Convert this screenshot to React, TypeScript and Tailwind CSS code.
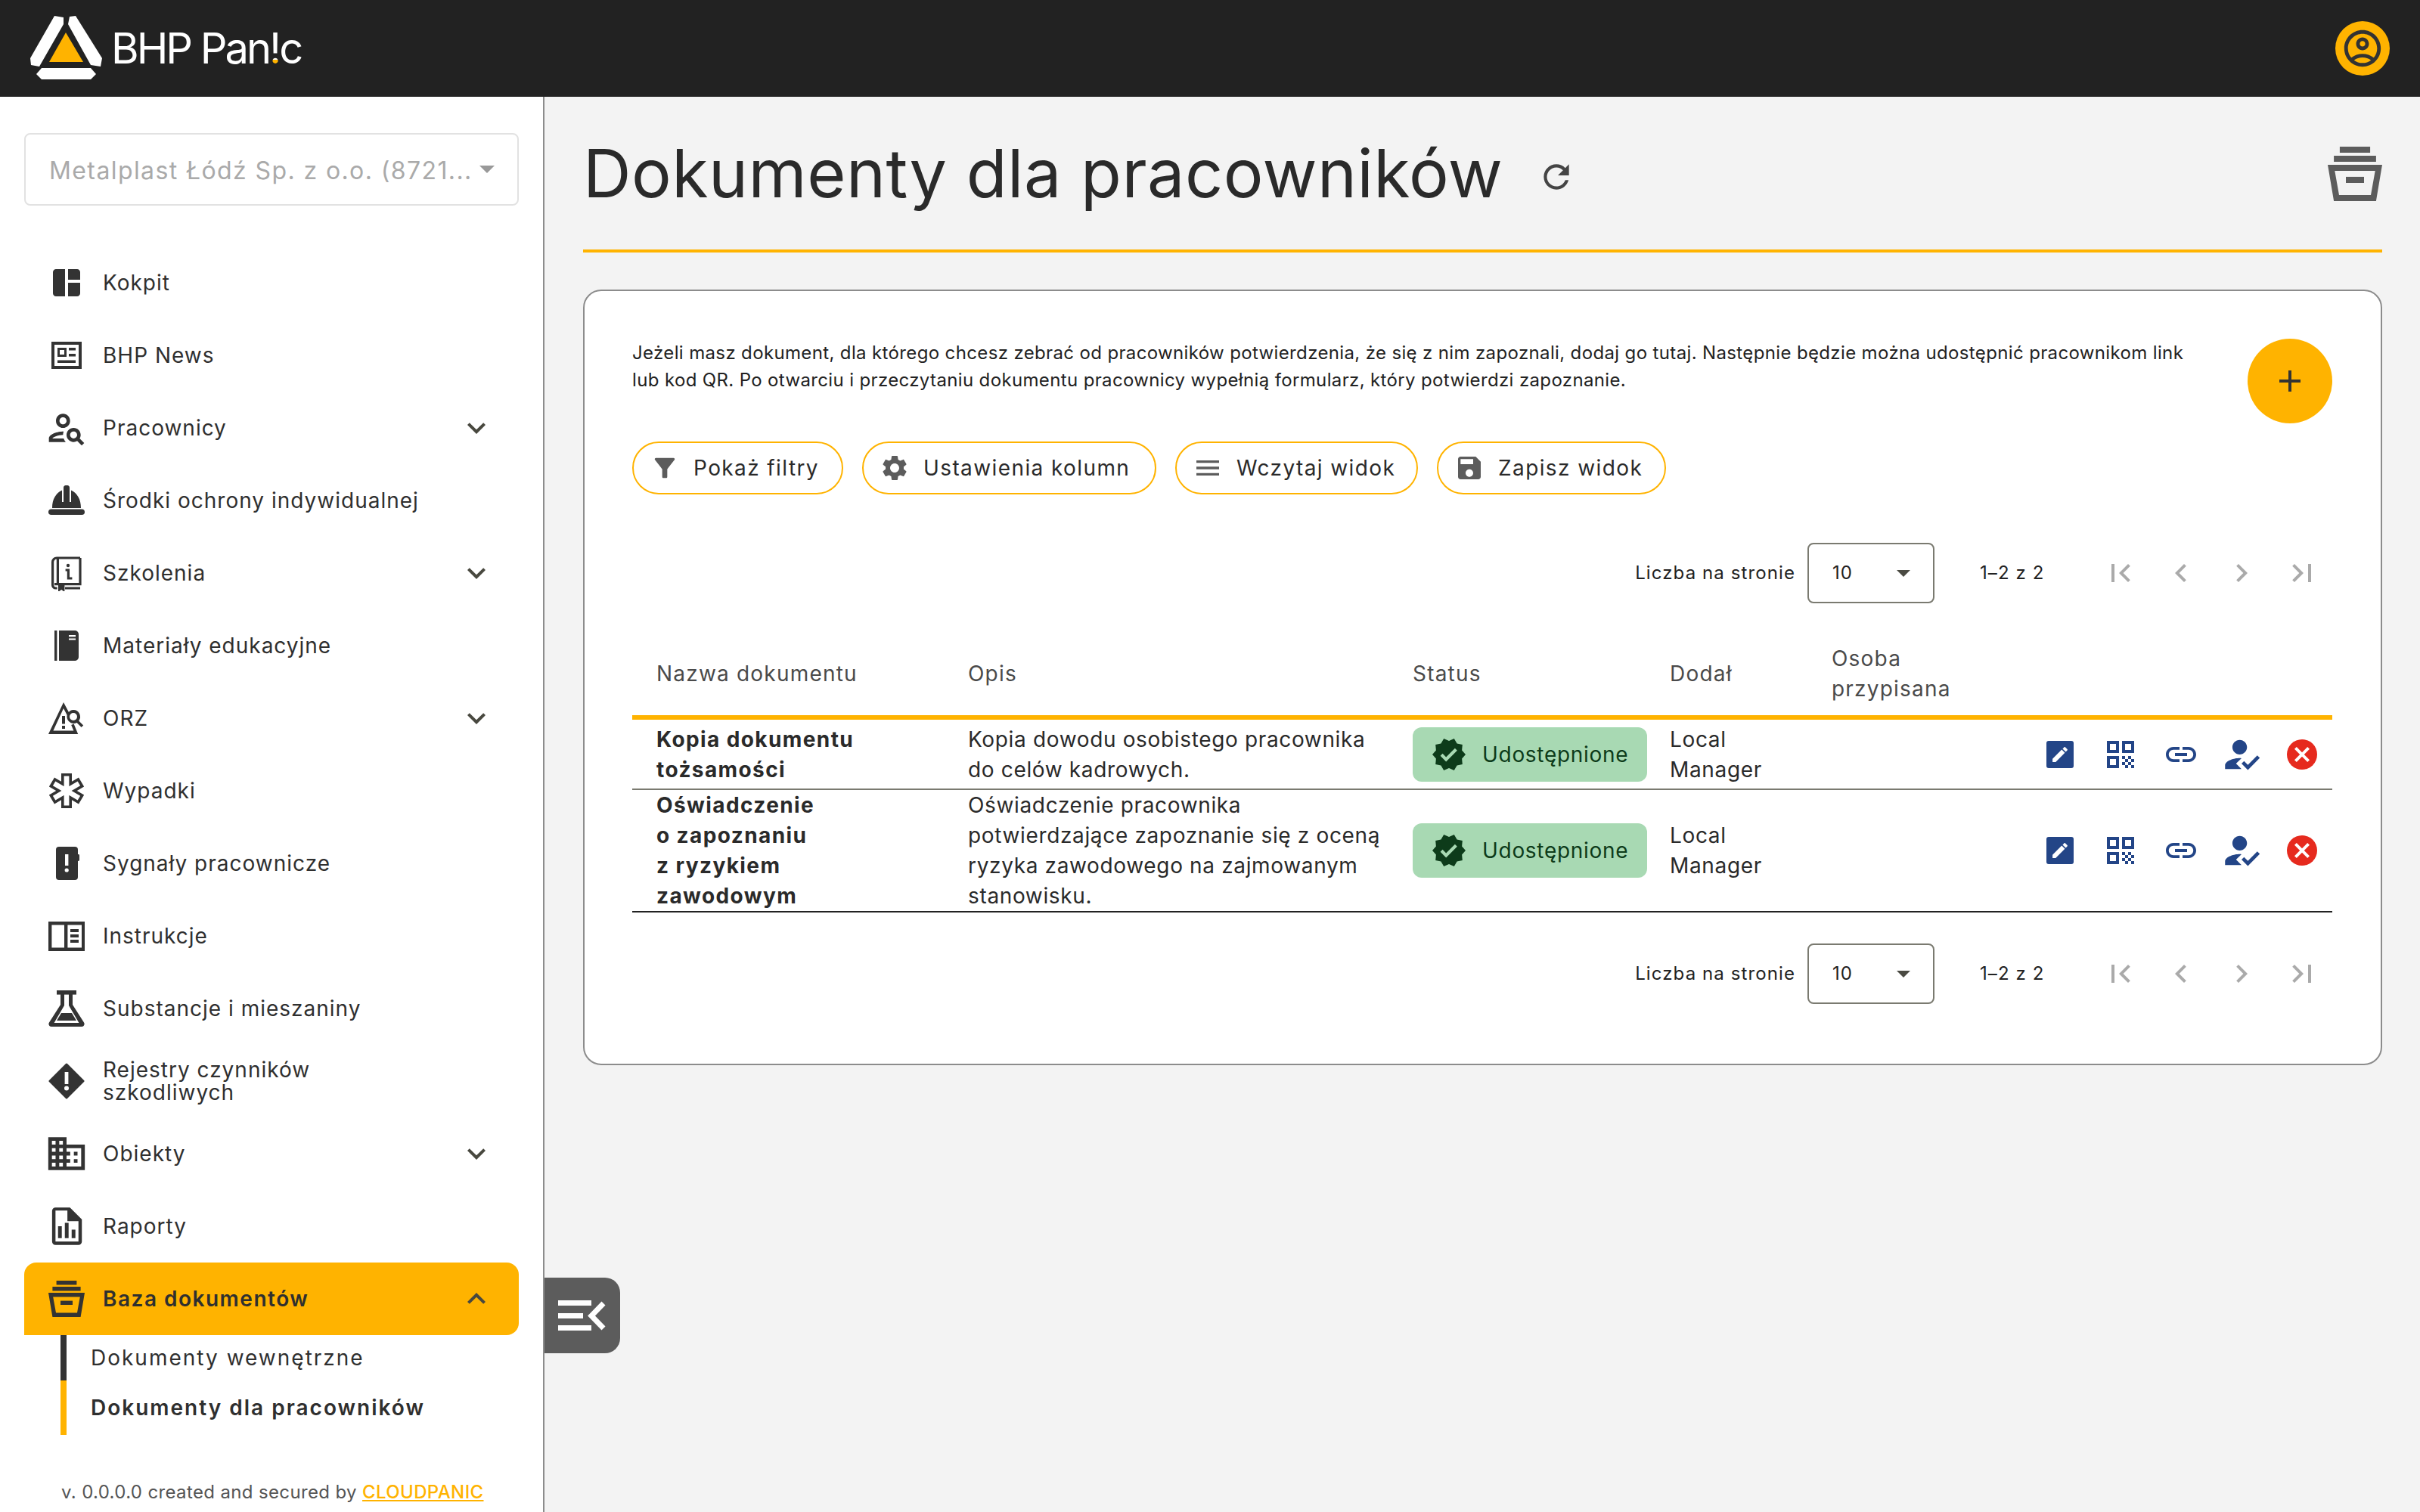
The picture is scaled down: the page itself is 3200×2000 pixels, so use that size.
import React from "react";

const ACCENT = "#ffb300";

type IconProps = { size?: number; className?: string };

const ArchiveIcon = ({ size = 48, className = "" }: IconProps) => (
  <svg width={size} height={size} viewBox="0 0 24 24" fill="currentColor" className={className}>
    <path d="M5.300 0h13.400v2.700H5.300zM2.700 4h18.600v2.700H2.700z" />
    <path
      fillRule="evenodd"
      d="M0 8h24l-2.700 16H2.700L0 8zm3.100 2.700 1.900 10.600h14l1.900-10.600H3.100z"
    />
    <path d="M8 13.300h8V16H8z" />
  </svg>
);

const Mat = ({ d, size = 48, className = "" }: IconProps & { d: string }) => (
  <svg width={size} height={size} viewBox="0 0 24 24" fill="currentColor" className={className}>
    <path fillRule="evenodd" d={d} />
  </svg>
);

const icons: Record<string, React.ReactNode> = {
  dashboard: <Mat size={48} d="M11 21H5c-1.100 0-2-.9-2-2V5c0-1.100.9-2 2-2h6v18zm2 0h6c1.100 0 2-.9 2-2v-7h-8v9zm8-11V5c0-1.100-.9-2-2-2h-6v7h8z" />,
  news: (
    <svg width="48" height="48" viewBox="0 0 24 24" fill="currentColor">
      <path fillRule="evenodd" d="M2 3h20v18H2V3zm2 2v14h16V5H4z" />
      <path fillRule="evenodd" d="M6 7h6v6H6V7zm1.500 1.500v3h3v-3h-3z" />
      <path d="M13.500 7H18v1.800h-4.500zM13.500 11H18v1.800h-4.500zM6 15.200h12V17H6z" />
    </svg>
  ),
  people: <Mat size={56} d="M10 12c2.210 0 4-1.790 4-4s-1.790-4-4-4-4 1.790-4 4 1.790 4 4 4zm0-6c1.100 0 2 .9 2 2s-.9 2-2 2-2-.9-2-2 .9-2 2-2zM4 18c.22-.72 3.310-2 6-2 0-.7.13-1.370.35-1.990C7.620 13.910 2 15.270 2 18v2h9.540c-.52-.59-.93-1.270-1.190-2H4zM19.430 18.020c.36-.58.57-1.260.57-2.020 0-2.210-1.790-4-4-4s-4 1.790-4 4 1.790 4 4 4c.74 0 1.430-.22 2.020-.57L20.590 22 22 20.590l-2.570-2.570zM16 18c-1.100 0-2-.9-2-2s.9-2 2-2 2 .9 2 2-.9 2-2 2z" />,
  helmet: (
    <svg width="48" height="48" viewBox="0 0 24 24" fill="currentColor">
      <path d="M2.500 17C2.500 11 5 7 9 5.200V13h1V3.500c0-.8.6-1.500 1.400-1.500h1.200c.8 0 1.400.7 1.400 1.500V13h1V5.200C19 7 21.500 11 21.500 17z" />
      <rect x="0" y="17.700" width="24" height="3.800" rx="1.900" />
    </svg>
  ),
  book: (
    <svg width="48" height="48" viewBox="0 0 24 24" fill="none" stroke="currentColor">
      <path strokeWidth="1.600" d="M21 2H5.500C4 2 2.800 3.200 2.800 4.700V20c0 1.200.9 2 2 2h1M11 22h10M4 19.300h17V2M6.200 2.200v17" />
      <path fill="currentColor" stroke="none" d="M6.500 20h4.200v4.500l-2.100-1.500-2.100 1.500z" />
      <circle cx="13" cy="7" r="1.100" fill="currentColor" stroke="none" />
      <path strokeWidth="1.600" d="M11.300 10h1.900v5.500h2.500" />
    </svg>
  ),
  material: (
    <svg width="48" height="48" viewBox="0 0 24 24" fill="currentColor">
      <path d="M4 2h1.700v20H4zM7 2h10.500C18.900 2 20 3.100 20 4.500v15c0 1.400-1.100 2.500-2.500 2.500H7z" />
      <path fill="#fff" d="M13.500 5H18v1.100h-4.500zM13.500 7.200H18v1.100h-4.500z" />
    </svg>
  ),
  orz: (
    <svg width="48" height="48" viewBox="0 0 24 24" fill="currentColor">
      <path fillRule="evenodd" d="M10 1.500 14 9l-1.500 1.200-2.500-4.700L3.200 20.300h13.500l-1.600-3.800 1.700-.7 2.800 6.700H0L10 1.500z" />
      <path d="M9 10.500h2v5.200H9zM9 17h2v2H9z" />
      <path fillRule="evenodd" d="M16.500 6.500a4.500 4.500 0 0 1 3.600 7.200l3 3-1.300 1.300-3-3a4.500 4.500 0 1 1-2.300-8.500zm0 2a2.500 2.500 0 1 0 0 5 2.500 2.500 0 0 0 0-5z" />
    </svg>
  ),
  star: (
    <svg width="48" height="48" viewBox="0 0 24 24" fill="none">
      <g stroke="currentColor" strokeWidth="7">
        <path d="M12 .5v23M2.200 6.200l19.600 11.600M21.800 6.200 2.200 17.800" />
      </g>
      <g stroke="#fff" strokeWidth="3.400">
        <path d="M12 2.300v19.400M3.800 7.200l16.400 9.600M20.200 7.200 3.800 16.800" />
      </g>
    </svg>
  ),
  signal: (
    <svg width="48" height="48" viewBox="0 0 24 24" fill="currentColor">
      <rect x="5" y="1" width="14.500" height="22" rx="2" />
      <rect x="19" y="6" width="1.500" height="4.500" rx=".7" />
      <rect x="11" y="6" width="2.200" height="7.500" fill="#fff" />
      <circle cx="12.100" cy="16.500" r="1.300" fill="#fff" />
    </svg>
  ),
  reader: (
    <svg width="48" height="48" viewBox="0 0 24 24" fill="currentColor">
      <path fillRule="evenodd" d="M0 2.500h24v19.500H0V2.500zm2.200 2.200v15h8.300v-15H2.200zm10.500 0v15H22v-15h-9.300z" />
      <path d="M14.500 7.500H20v2h-5.500zM14.500 11h5.500v2h-5.500zM14.500 14.500h5.500v2h-5.500z" />
    </svg>
  ),
  flask: (
    <svg width="48" height="48" viewBox="0 0 24 24" fill="currentColor">
      <path d="M5.500 0h13v2.800h-13z" />
      <path fillRule="evenodd" d="M8 2.500h2.500V10L3.800 21.500h16.400L13.500 10V2.500H16v7l7.500 11.800c.8 1.300-.1 2.700-1.500 2.700H2c-1.400 0-2.300-1.400-1.500-2.700L8 9.500v-7z" />
      <path d="M8.500 15h7l3 5h-13z" />
    </svg>
  ),
  hazard: (
    <svg width="48" height="48" viewBox="0 0 24 24" fill="currentColor">
      <path stroke="currentColor" strokeWidth="1.500" strokeLinejoin="round" d="M12 1 23 12 12 23 1 12z" />
      <rect x="10.800" y="6" width="2.400" height="8" fill="#fff" />
      <circle cx="12" cy="16.800" r="1.500" fill="#fff" />
    </svg>
  ),
  domain: <Mat size={58} d="M12 7V3H2v18h20V7H12zM6 19H4v-2h2v2zm0-4H4v-2h2v2zm0-4H4V9h2v2zm0-4H4V5h2v2zm4 12H8v-2h2v2zm0-4H8v-2h2v2zm0-4H8V9h2v2zm0-4H8V5h2v2zm10 12h-8v-2h2v-2h-2v-2h2v-2h-2V9h8v10zm-2-8h-2v2h2v-2zm0 4h-2v2h2v-2z" />,
  report: (
    <svg width="54" height="54" viewBox="0 0 24 24" fill="currentColor">
      <path fillRule="evenodd" d="M5.500 1H14l7 7v13c0 1.100-.9 2-2 2H5.500c-1.100 0-2-.9-2-2V3c0-1.100.9-2 2-2zm0 1.800V21H19V9h-6.500V2.800h-7z" />
      <path d="M7 12h2.200v7H7zM11 10h2.200v9H11zM15 14h2.200v5H15z" />
    </svg>
  ),
  archive: <ArchiveIcon size={48} />,
};

const navItems = [
  { icon: "dashboard", label: "Kokpit" },
  { icon: "news", label: "BHP News" },
  { icon: "people", label: "Pracownicy", arrow: true },
  { icon: "helmet", label: "Środki ochrony indywidualnej" },
  { icon: "book", label: "Szkolenia", arrow: true },
  { icon: "material", label: "Materiały edukacyjne" },
  { icon: "orz", label: "ORZ", arrow: true },
  { icon: "star", label: "Wypadki" },
  { icon: "signal", label: "Sygnały pracownicze" },
  { icon: "reader", label: "Instrukcje" },
  { icon: "flask", label: "Substancje i mieszaniny" },
  { icon: "hazard", label: "Rejestry czynników", label2: "szkodliwych" },
  { icon: "domain", label: "Obiekty", arrow: true },
  { icon: "report", label: "Raporty" },
];

const Chevron = ({ up = false }: { up?: boolean }) => (
  <svg width="48" height="48" viewBox="0 0 24 24" fill="#48483f">
    <path d={up ? "M7.410 15.410 12 10.830l4.590 4.580L18 14l-6-6-6 6z" : "M7.410 8.590 12 13.170l4.590-4.580L18 10l-6 6-6-6z"} />
  </svg>
);

const Logo = () => (
  <div className="flex items-center">
    <svg width="100" height="90" viewBox="38 20 100 90" className="ml-[38px]">
      <path fill="#fff" d="M72 22l12 2v9L52 89l-11-2-1-9zM92 23l8-1 35 56-2 11-13-2-30-54zM48 99l7-8h65l7 8-7 7H55z" />
      <path fill={ACCENT} d="M87 44l23 39H65z" />
    </svg>
    <div className="ml-[9px] text-[56px] leading-none font-normal tracking-[-3px] text-white">
      BHP Pan
      <span className="bg-linear-to-b from-white from-[72%] to-[#ffb300] to-[72%] bg-clip-text text-transparent">!</span>
      c
    </div>
  </div>
);

const Sidebar = () => (
  <aside className="w-[720px] shrink-0 border-r-2 border-[#8c8c8c] bg-white">
    <div className="mx-[32px] mt-[48px] flex h-[96px] w-[654px] items-center justify-between rounded-lg border-[2px] border-[#e2e2e2] pl-[31px] pr-[30px] text-[32px] tracking-[1.4px] text-[#aaaaaa]">
      <span className="whitespace-nowrap pt-[4px]">Metalplast Łódź Sp. z o.o. (8721...</span>
      <span className="h-0 w-0 shrink-0 border-x-[10px] border-t-[10px] border-x-transparent border-t-[#999]" />
    </div>
    <nav className="mt-[54px]">
      {navItems.map((it) => (
        <div key={it.label} className="mx-[32px] flex h-[96px] w-[654px] items-center pl-[24px] text-[28px] leading-[30px] tracking-[1px] text-[#2f2f2f]">
          <span className="flex w-[64px] shrink-0 items-center justify-center text-[#333]">{icons[it.icon]}</span>
          <span className="ml-[16px] whitespace-nowrap">
            {it.label}
            {it.label2 && <br />}
            {it.label2}
          </span>
          {it.arrow && (
            <span className="ml-auto mr-[32px] flex">
              <Chevron />
            </span>
          )}
        </div>
      ))}
      <div className="mx-[32px] flex h-[96px] w-[654px] items-center rounded-t-[16px] rounded-br-[16px] bg-[#ffb300] pl-[24px] text-[28px] font-semibold tracking-[1.5px] text-[#2f2f2f]">
        <span className="flex w-[64px] justify-center text-[#333]">{icons.archive}</span>
        <span className="ml-[16px]">Baza dokumentów</span>
        <span className="ml-auto mr-[32px] flex">
          <Chevron up />
        </span>
      </div>
    </nav>
    <div className="ml-[80px] flex h-[132px] flex-col text-[28px] tracking-[2px] text-[#2f2f2f]">
      <div className="flex h-[60px] items-center border-l-8 border-[#333] pl-[32px]">Dokumenty wewnętrzne</div>
      <div className="flex h-[72px] items-center border-l-8 border-[#ffb300] pl-[32px] font-semibold">Dokumenty dla pracowników</div>
    </div>
    <div className="ml-[81px] mt-[61px] text-[24px] leading-[30px] tracking-[0.36px] text-[#555]">
      v. 0.0.0.0 created and secured by <span className="font-medium text-[#ffb300] underline">CLOUDPANIC</span>
    </div>
  </aside>
);

const BLUE = "#234587";

const Actions = () => (
  <div className="flex items-center justify-end gap-[32px] pr-[16px]" style={{ color: BLUE }}>
    <svg width="48" height="48" viewBox="0 0 24 24" fill="currentColor">
      <rect x="3" y="3" width="18" height="18" rx="1.500" />
      <path fill="#fff" transform="translate(5.400 5.400) scale(.55)" d="M3 17.250V21h3.750L17.810 9.940l-3.750-3.750L3 17.250zM20.710 7.040c.39-.39.39-1.020 0-1.410l-2.340-2.340c-.39-.39-1.020-.39-1.410 0l-1.830 1.830 3.750 3.750 1.830-1.830z" />
    </svg>
    <Mat d="M3 11h8V3H3v8zm2-6h4v4H5V5zM3 21h8v-8H3v8zm2-6h4v4H5v-4zM13 3v8h8V3h-8zm6 6h-4V5h4v4zM19 19h2v2h-2zM13 13h2v2h-2zM15 15h2v2h-2zM13 17h2v2h-2zM15 19h2v2h-2zM17 17h2v2h-2zM17 13h2v2h-2zM19 15h2v2h-2z" />
    <Mat d="M3.900 12c0-1.710 1.390-3.100 3.100-3.100h4V7H7c-2.760 0-5 2.240-5 5s2.240 5 5 5h4v-1.900H7c-1.710 0-3.100-1.390-3.100-3.100zM8 13h8v-2H8v2zm9-6h-4v1.900h4c1.710 0 3.100 1.390 3.100 3.100s-1.390 3.100-3.100 3.100h-4V17h4c2.760 0 5-2.240 5-5s-2.240-5-5-5z" />
    <Mat size={58} className="-mx-[5px] -my-[5px]" d="M9 17l3-2.940c-.39-.04-.68-.06-1-.06-2.670 0-8 1.340-8 4v2h9l-3-3zm2-5c2.210 0 4-1.790 4-4s-1.790-4-4-4-4 1.790-4 4 1.790 4 4 4zM15.470 20.500 12 17l1.400-1.410 2.070 2.080 5.130-5.170 1.400 1.410z" />
    <svg width="48" height="48" viewBox="0 0 24 24">
      <circle cx="12" cy="12" r="10" fill="#e62a1e" />
      <path fill="#fff" d="M17 15.590 15.590 17 12 13.410 8.410 17 7 15.590 10.590 12 7 8.410 8.410 7 12 10.590 15.590 7 17 8.410 13.410 12z" />
    </svg>
  </div>
);

const StatusChip = () => (
  <div className="flex h-[72px] w-[310px] items-center rounded-[12px] bg-[#a8d9b3] pl-[24px] text-[#0d3b1a]">
    <svg width="48" height="48" viewBox="0 0 24 24" fill="currentColor">
      <path d="M23 12l-2.440-2.780.34-3.680-3.610-.82-1.890-3.180L12 3 8.600 1.540 6.710 4.720l-3.610.81.34 3.680L1 12l2.440 2.780-.34 3.690 3.610.82 1.890 3.180L12 21l3.400 1.460 1.890-3.180 3.610-.82-.34-3.680L23 12zm-12.910 4.720-3.800-3.810 1.480-1.480 2.320 2.330 5.850-5.870 1.480 1.480-7.330 7.350z" />
    </svg>
    <span className="ml-[20px] text-[28px] tracking-[0.7px]">Udostępnione</span>
  </div>
);

const Pager = () => (
  <div className="flex items-center justify-end pr-[16px] text-[24px] tracking-[1.1px] text-[#222]">
    <span>Liczba na stronie</span>
    <div className="ml-[16px] flex h-[80px] w-[168px] items-center justify-between rounded-[8px] border-2 border-[#7a7a70] pl-[31px] pr-[30px]">
      <span>10</span>
      <span className="h-0 w-0 border-x-[9px] border-t-[9px] border-x-transparent border-t-[#4a4a42]" />
    </div>
    <span className="ml-[60px] w-[82px] whitespace-nowrap">1–2 z 2</span>
    <div className="ml-[80px] flex gap-[32px] text-[#aaaaaa]">
      <Mat d="M18.410 16.590 13.820 12l4.590-4.590L17 6l-6 6 6 6zM6 6h2v12H6z" />
      <Mat d="M15.410 7.410 14 6l-6 6 6 6 1.410-1.410L10.830 12z" />
      <Mat d="M10 6 8.590 7.410 13.170 12l-4.580 4.590L10 18l6-6z" />
      <Mat d="M5.590 7.410 10.180 12l-4.590 4.590L7 18l6-6-6-6zM16 6h2v12h-2z" />
    </div>
  </div>
);

const btns: { label: string; d: string; w: string }[] = [
  { label: "Pokaż filtry", w: "w-[279px]", d: "M4.250 5.610C6.270 8.200 10 13 10 13v6c0 .55.45 1 1 1h2c.55 0 1-.45 1-1v-6s3.720-4.800 5.740-7.390c.51-.66.04-1.610-.79-1.610H5.040c-.83 0-1.300.95-.79 1.610z" },
  { label: "Ustawienia kolumn", w: "w-[389px]", d: "M19.140 12.940c.04-.3.06-.61.06-.94 0-.32-.02-.64-.07-.94l2.030-1.580c.18-.14.23-.41.12-.61l-1.920-3.320c-.12-.22-.37-.29-.59-.22l-2.390.96c-.5-.38-1.030-.7-1.620-.94l-.36-2.540c-.04-.24-.24-.41-.48-.41h-3.840c-.24 0-.43.17-.47.41l-.36 2.540c-.59.24-1.130.57-1.620.94l-2.390-.96c-.22-.08-.47 0-.59.22L2.740 8.870c-.12.21-.08.47.12.61l2.030 1.580c-.05.3-.09.63-.09.94s.02.64.07.94l-2.030 1.580c-.18.14-.23.41-.12.61l1.920 3.320c.12.22.37.29.59.22l2.390-.96c.5.38 1.030.7 1.620.94l.36 2.540c.05.24.24.41.48.41h3.840c.24 0 .44-.17.47-.41l.36-2.540c.59-.24 1.130-.56 1.620-.94l2.390.96c.22.08.47 0 .59-.22l1.920-3.320c.12-.22.07-.47-.12-.61l-2.010-1.580zM12 15.600c-1.980 0-3.600-1.620-3.600-3.600s1.620-3.600 3.600-3.600 3.600 1.620 3.600 3.600-1.620 3.600-3.600 3.600z" },
  { label: "Wczytaj widok", w: "w-[321px]", d: "M3 18h18v-2H3v2zm0-5h18v-2H3v2zm0-7v2h18V6H3z" },
  { label: "Zapisz widok", w: "w-[303px]", d: "M17 3H5c-1.110 0-2 .9-2 2v14c0 1.100.89 2 2 2h14c1.100 0 2-.9 2-2V7l-4-4zm-5 16c-1.660 0-3-1.340-3-3s1.340-3 3-3 3 1.340 3 3-1.340 3-3 3zm3-10H5V5h10v4z" },
];

const docs = [
  {
    name: ["Kopia dokumentu", "tożsamości"],
    desc: ["Kopia dowodu osobistego pracownika", "do celów kadrowych."],
    border: "border-[#7a7a70]",
    height: "h-[95px]",
  },
  {
    name: ["Oświadczenie", "o zapoznaniu", "z ryzykiem", "zawodowym"],
    desc: ["Oświadczenie pracownika", "potwierdzające zapoznanie się z oceną", "ryzyka zawodowego na zajmowanym", "stanowisku."],
    border: "border-[#222]",
    height: "h-[162px]",
  },
];

const DocsTable = () => (
  <table className="mt-[38px] w-[2248px] table-fixed border-collapse text-[28px] leading-[40px] tracking-[0.65px] text-[#2a2a2a]">
    <colgroup>
      <col className="w-[412px]" />
      <col className="w-[588px]" />
      <col className="w-[340px]" />
      <col className="w-[214px]" />
      <col className="w-[270px]" />
      <col />
    </colgroup>
    <thead>
      <tr className="h-[113px] border-b-[6px] border-[#ffb300] text-left tracking-[1.2px] text-[#4a4a4a]">
        <th className="pl-[32px] font-normal">Nazwa dokumentu</th>
        <th className="pl-[32px] font-normal">Opis</th>
        <th className="pl-[32px] font-normal">Status</th>
        <th className="pl-[32px] font-normal">Dodał</th>
        <th className="pl-[32px] font-normal">Osoba<br />przypisana</th>
        <th />
      </tr>
    </thead>
    <tbody>
      {docs.map((d) => (
        <tr key={d.name[0]} className={`${d.height} border-b-2 ${d.border}`}>
          <td className="pl-[32px] font-bold tracking-[1.4px]">
            {d.name.map((n) => <div key={n}>{n}</div>)}
          </td>
          <td className="pl-[32px]">
            {d.desc.map((n) => <div key={n} className="whitespace-nowrap">{n}</div>)}
          </td>
          <td className="pl-[32px]"><StatusChip /></td>
          <td className="pl-[32px]">Local<br />Manager</td>
          <td />
          <td><Actions /></td>
        </tr>
      ))}
    </tbody>
  </table>
);

export default function App() {
  return (
    <div className="flex h-[2000px] w-[3200px] flex-col overflow-hidden bg-[#f3f3f3] font-[Inter,sans-serif]">
      <header className="flex h-[128px] shrink-0 items-center justify-between bg-[#222222] pr-[40px]">
        <Logo />
        <span className="flex h-[72px] w-[72px] items-center justify-center rounded-full bg-[#ffb300] text-[#333]">
          <Mat size={58} d="M12 2C6.480 2 2 6.480 2 12s4.480 10 10 10 10-4.480 10-10S17.520 2 12 2zM7.350 18.500C8.660 17.560 10.260 17 12 17s3.340.56 4.650 1.500c-1.310.94-2.910 1.500-4.650 1.500s-3.340-.56-4.650-1.500zm10.790-1.380C16.450 15.800 14.320 15 12 15s-4.450.8-6.140 2.120C4.700 15.730 4 13.950 4 12c0-4.420 3.580-8 8-8s8 3.580 8 8c0 1.950-.7 3.730-1.860 5.120zM12 6c-1.930 0-3.500 1.570-3.500 3.500S10.070 13 12 13s3.500-1.570 3.500-3.500S13.930 6 12 6zm0 5c-.83 0-1.500-.67-1.500-1.500S11.170 8 12 8s1.500.67 1.500 1.500S12.830 11 12 11z" />
        </span>
      </header>
      <div className="flex min-h-0 flex-1">
        <Sidebar />
        <main className="relative min-w-0 flex-1 pl-[51px] pr-[50px]">
          <button className="absolute left-0 top-[1562px] flex h-[100px] w-[100px] items-center justify-center rounded-r-[20px] bg-[#5c5c5c] text-white">
            <svg width="64" height="64" viewBox="0 0 32 32" fill="none" stroke="currentColor">
              <path strokeWidth="3.500" d="M0 7.750h22M0 16.250h16.500M0 24.250h22" />
              <path strokeWidth="3.500" d="M30 8 22 16.250 30 24.500" />
            </svg>
          </button>
          <div className="flex h-[206px] items-center justify-between border-b-4 border-[#ffb300]">
            <div className="flex items-center">
              <h1 className="text-[88px] leading-none font-normal tracking-[0.5px] text-[#2a2a2a]">Dokumenty dla pracowników</h1>
              <span className="ml-[46px] mt-[10px] text-[#444]">
                <Mat size={50} d="M17.650 6.350C16.200 4.900 14.210 4 12 4c-4.420 0-7.990 3.580-7.990 8s3.570 8 7.990 8c3.730 0 6.840-2.550 7.730-6h-2.080c-.82 2.330-3.040 4-5.650 4-3.310 0-6-2.690-6-6s2.690-6 6-6c1.660 0 3.140.69 4.220 1.780L13 11h7V4l-2.350 2.350z" />
              </span>
            </div>
            <span className="mt-[2px] text-[#5c5c5c]"><ArchiveIcon size={72} /></span>
          </div>
          <section className="mt-[49px] h-[1026px] rounded-[24px] border-2 border-[#8c8c8c] bg-white pl-[63px] pr-[64px]">
            <div className="flex justify-between pt-[64px]">
              <p className="w-[2070px] text-[24px] leading-[36px] tracking-[0.36px] text-[#222]">
                Jeżeli masz dokument, dla którego chcesz zebrać od pracowników potwierdzenia, że się z nim zapoznali, dodaj go tutaj. Następnie będzie można udostępnić pracownikom link lub kod QR. Po otwarciu i przeczytaniu dokumentu pracownicy wypełnią formularz, który potwierdzi zapoznanie.
              </p>
              <button className="mt-[-1px] flex h-[112px] w-[112px] items-center justify-center rounded-full bg-[#ffb300] text-[#333]">
                <Mat size={48} d="M19 13h-6v6h-2v-6H5v-2h6V5h2v6h6v2z" />
              </button>
            </div>
            <div className="mt-[24px] flex gap-[25px]">
              {btns.map((b) => (
                <button key={b.label} className={`flex h-[70px] ${b.w} items-center rounded-full border-2 border-[#ffb300] pl-[21px] text-[28px] tracking-[1.4px] text-[#2a2a2a]`}>
                  <span className="text-[#5c5c5c]"><Mat size={40} d={b.d} /></span>
                  <span className="ml-[18px] whitespace-nowrap">{b.label}</span>
                </button>
              ))}
            </div>
            <div className="mt-[64px]"><Pager /></div>
            <DocsTable />
            <div className="mt-[41px]"><Pager /></div>
          </section>
        </main>
      </div>
    </div>
  );
}
